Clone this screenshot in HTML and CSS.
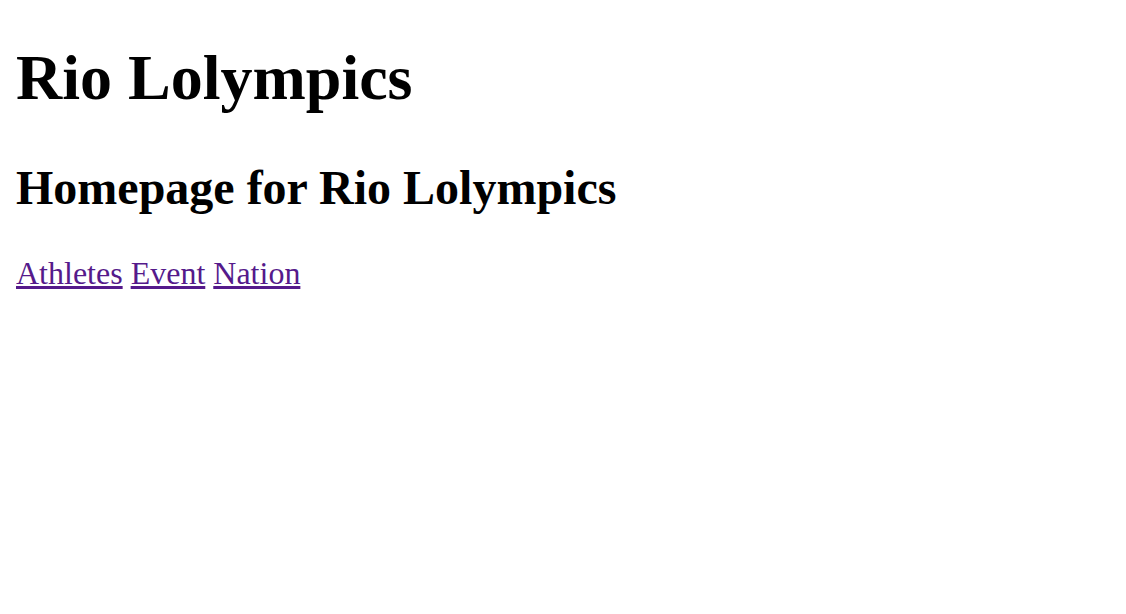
FILE: index.html
```html
<!DOCTYPE html>
<html lang="en">
<head>
<meta charset="utf-8">
<title>Rio Lolympics</title>
<link rel="stylesheet" href="styles.css">
</head>
<body class="page">
<h1 class="title">Rio Lolympics</h1>
<h2 class="subtitle">Homepage for Rio Lolympics</h2>
<nav class="nav">
<a class="nav-link" href="#athletes">Athletes</a>
<a class="nav-link" href="#event">Event</a>
<a class="nav-link" href="#nation">Nation</a>
</nav>
</body>
</html>
```
FILE: styles.css
```css
html { background: #fff; }
.page {
  margin: 16px;
  font-family: "Liberation Serif", "Times New Roman", serif;
  font-size: 32px;
  color: #000;
}
.title {
  font-size: 64px;
  font-weight: bold;
  margin: 25px 0 44.88px;
}
.subtitle {
  font-size: 48px;
  font-weight: bold;
  margin: 39.84px 0;
}
.nav {
  display: block;
  margin: 32px 0;
}
.nav-link {
  color: #551a8b;
  text-decoration: underline;
}
```
